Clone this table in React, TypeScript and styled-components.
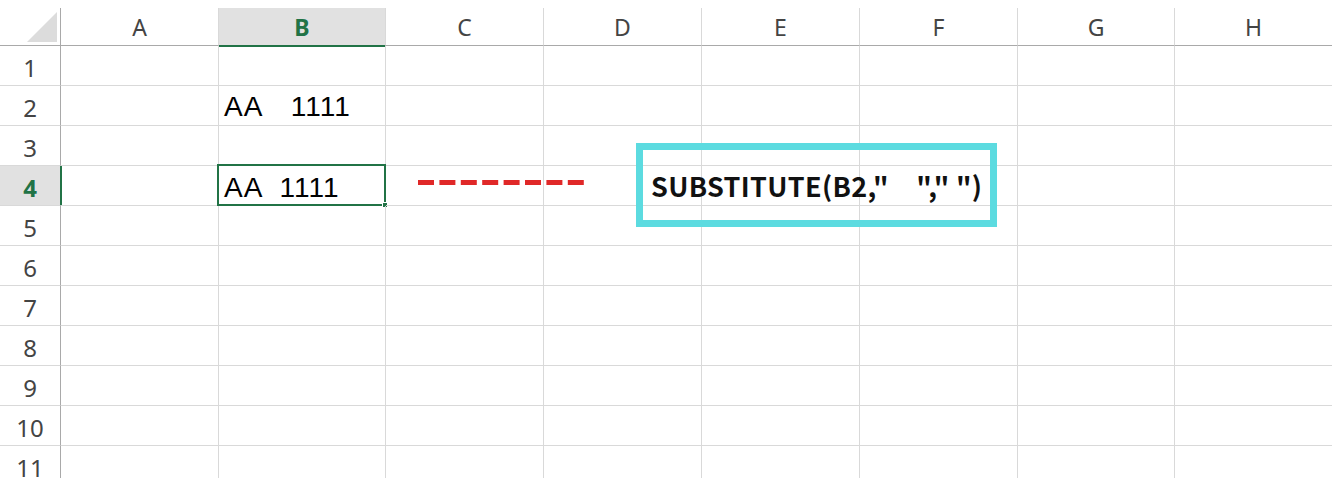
import React from "react";
import styled, { createGlobalStyle } from "styled-components";

const GlobalStyle = createGlobalStyle`
  html, body { margin: 0; padding: 0; background: #ffffff; }
  body { width: 1332px; height: 478px; overflow: hidden; }
  * { box-sizing: border-box; }
`;

const COLS = ["A", "B", "C", "D", "E", "F", "G", "H"];
const ROWS = [1, 2, 3, 4, 5, 6, 7, 8, 9, 10, 11];

const Sheet = styled.div`
  position: relative;
  width: 1332px;
  height: 478px;
  padding-top: 8px;
  overflow: hidden;
  background: #fff;
`;

const Grid = styled.div`
  display: grid;
  grid-template-columns: 61px 158px 167px 158px 158px 158px 158px 157px 158px;
  grid-template-rows: 38px repeat(11, 40px);
`;

const Corner = styled.div`
  position: relative;
  border-right: 1px solid #a9a9a9;
  border-bottom: 1px solid #a9a9a9;
  display: flex;
  align-items: flex-end;
  justify-content: flex-end;
  padding: 0 3px 3px 0;
`;

const Triangle = styled.div`
  width: 30px;
  height: 30px;
  background: #dcdcdc;
  clip-path: polygon(100% 0, 100% 100%, 0 100%);
`;

const ColHead = styled.div<{ $active?: boolean }>`
  display: flex;
  align-items: center;
  justify-content: center;
  padding-top: 1px;
  font-family: "Noto Sans", "Open Sans", sans-serif;
  font-size: 23px;
  color: ${(p) => (p.$active ? "#217346" : "#444")};
  font-weight: ${(p) => (p.$active ? 700 : 400)};
  background: ${(p) => (p.$active ? "#e1e1e1" : "#fff")};
  border-right: 1px solid #d9d9d9;
  border-bottom: ${(p) => (p.$active ? "2px solid #217346" : "1px solid #a9a9a9")};
  margin-bottom: ${(p) => (p.$active ? "-1px" : "0")};
`;

const RowHead = styled.div<{ $active?: boolean }>`
  display: flex;
  align-items: center;
  justify-content: center;
  padding-top: 3px;
  font-family: "Noto Sans", "Open Sans", sans-serif;
  font-size: 24px;
  color: ${(p) => (p.$active ? "#217346" : "#444")};
  font-weight: ${(p) => (p.$active ? 700 : 400)};
  background: ${(p) => (p.$active ? "#e1e1e1" : "#fff")};
  border-bottom: 1px solid #d9d9d9;
  border-right: ${(p) => (p.$active ? "2px solid #217346" : "1px solid #a9a9a9")};
  margin-right: ${(p) => (p.$active ? "-1px" : "0")};
`;

const Cell = styled.div`
  position: relative;
  display: flex;
  align-items: flex-end;
  padding: 0 0 1px 5px;
  border-right: 1px solid #d9d9d9;
  border-bottom: 1px solid #d9d9d9;
  font-family: "Liberation Sans", "Noto Sans CJK JP", Arial, sans-serif;
  font-size: 28px;
  color: #000;
  white-space: nowrap;
`;

const Selection = styled.div`
  position: absolute;
  left: -2px;
  top: -2px;
  right: -1px;
  bottom: -1px;
  border: 2px solid #217346;
  pointer-events: none;
`;

const Handle = styled.div`
  position: absolute;
  right: -4px;
  bottom: -4px;
  width: 6px;
  height: 6px;
  background: #217346;
  border: 1px solid #fff;
`;

const CellText = styled.span<{ $wide?: boolean }>`
  letter-spacing: 1px;
  word-spacing: ${(p) => (p.$wide ? "9px" : "0")};
`;

const Dashes = styled.svg`
  position: absolute;
  left: 418px;
  top: 180px;
`;

const FormulaBox = styled.div`
  position: absolute;
  left: 636px;
  top: 143px;
  width: 361px;
  height: 84px;
  border: 7px solid #5cdbe0;
  display: flex;
  align-items: center;
  padding: 0 0 0 8px;
  font-family: "Noto Sans CJK JP", "Noto Sans", sans-serif;
  font-weight: 700;
  font-size: 27px;
  letter-spacing: 0.35px;
  color: #111;
  white-space: pre;
`;

const cellContent: Record<string, string> = {
  B2: "AA\u30001111",
  B4: "AA 1111",
};

export default function App() {
  return (
    <>
      <GlobalStyle />
      <Sheet>
        <Grid>
          <Corner>
            <Triangle />
          </Corner>
          {COLS.map((c) => (
            <ColHead key={c} $active={c === "B"}>
              {c}
            </ColHead>
          ))}
          {ROWS.map((r) => (
            <React.Fragment key={r}>
              <RowHead $active={r === 4}>{r}</RowHead>
              {COLS.map((c) => {
                const id = `${c}${r}`;
                const text = cellContent[id];
                return (
                  <Cell key={id}>
                    {text && <CellText $wide={id === "B4"}>{text}</CellText>}
                    {id === "B4" && (
                      <Selection>
                        <Handle />
                      </Selection>
                    )}
                  </Cell>
                );
              })}
            </React.Fragment>
          ))}
        </Grid>
        <Dashes width="166" height="5" viewBox="0 0 166 5">
          <line
            x1="0"
            y1="2.5"
            x2="166"
            y2="2.5"
            stroke="#e02828"
            strokeWidth="5"
            strokeDasharray="16 5.4"
          />
        </Dashes>
        <FormulaBox>{'SUBSTITUTE(B2,"\u3000"," ")'}</FormulaBox>
      </Sheet>
    </>
  );
}
